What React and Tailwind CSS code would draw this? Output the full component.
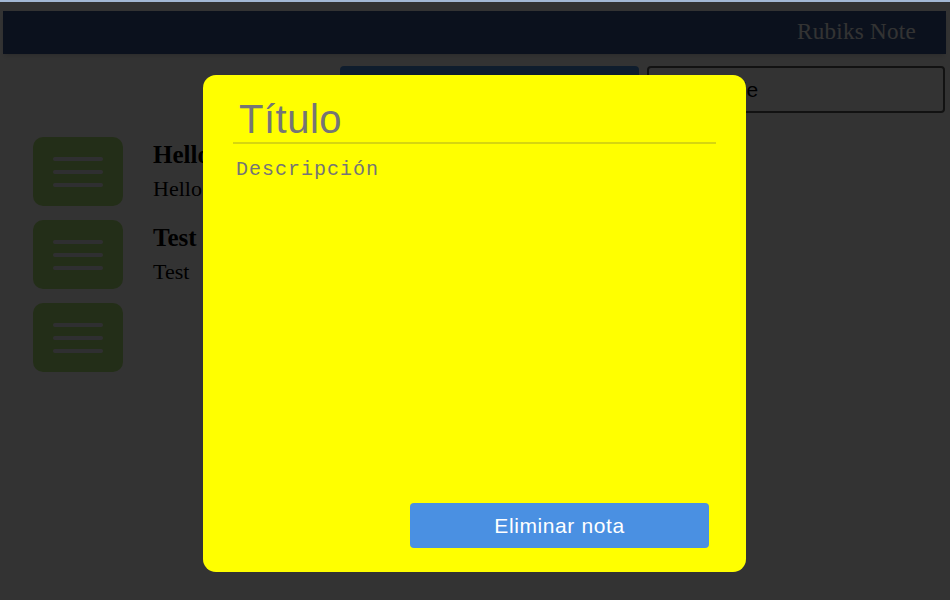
import React from 'react';

const notes = [
  { title: 'Hello', body: 'Hello' },
  { title: 'Test', body: 'Test' },
  { title: '', body: '' },
];

const NoteIcon = () => (
  <div className="w-[90px] h-[69px] shrink-0 rounded-[10px] bg-[#b0e478] flex flex-col items-center justify-center gap-[9px]">
    <div className="w-[50px] h-[4px] rounded-full bg-[#ececf6]" />
    <div className="w-[50px] h-[4px] rounded-full bg-[#ececf6]" />
    <div className="w-[50px] h-[4px] rounded-full bg-[#ececf6]" />
  </div>
);

const App = () => {
  return (
    <div className="min-h-[600px] bg-white" style={{ fontFamily: '"Liberation Serif", serif' }}>
      <div className="relative z-[60] h-[2px] bg-[#a3b8d4]" />

      <nav className="ml-[3px] mr-[4px] mt-[9px] h-[43px] bg-[#37568f] shadow-md flex items-center justify-end pr-[30px]">
        <span className="text-[23px] tracking-[0.3px] text-white">Rubiks Note</span>
      </nav>

      <div className="mt-[12px] flex justify-end gap-[8px] pr-[5px]" style={{ fontFamily: '"Liberation Sans", sans-serif' }}>
        <button className="w-[299px] h-[47px] rounded-[4px] bg-[#4a90e2] text-white text-[21px]">Nueva nota</button>
        <button className="w-[298px] h-[47px] rounded-[4px] border-2 border-[#5a5a5a] bg-white text-black text-[21px] text-left pl-[10px]">Ver detalle</button>
      </div>

      <div className="mt-[24px] px-[33px] flex flex-col gap-[14px]">
        {notes.map((n, i) => (
          <div key={i} className="flex gap-[30px]">
            <NoteIcon />
            <div className="text-black">
              <p className="mt-[3px] text-[25px] leading-[30px] font-bold">{n.title}</p>
              <p className="mt-[4px] text-[22px] leading-[30px]">{n.body}</p>
            </div>
          </div>
        ))}
      </div>

      {/* modal */}
      <div className="fixed inset-0 z-50 bg-black/80 flex justify-center items-start pt-[75px] pr-[1px]">
        <div className="w-[543px] h-[497px] bg-[#ffff00] rounded-[13px] flex flex-col px-[30px] pt-[20px] pb-[24px]">
          <input
            placeholder="Título"
            className="h-[49px] w-full bg-transparent border-b-2 border-[#d6d610] px-[6px] text-[40px] tracking-[0.5px] text-[#757575] placeholder:text-[#757575] outline-none"
            style={{ fontFamily: '"Liberation Sans", sans-serif' }}
          />
          <textarea
            placeholder="Descripción"
            className="flex-1 w-full resize-none bg-transparent px-[3px] pt-[11px] text-[20px] tracking-[1px] text-[#757575] placeholder:text-[#757575] outline-none"
            style={{ fontFamily: '"Liberation Mono", monospace' }}
          />
          <div className="flex justify-end pr-[7px]">
            <button
              className="w-[299px] h-[45px] rounded-[4px] bg-[#4a90e2] text-white text-[21px] tracking-[0.6px]"
              style={{ fontFamily: '"Liberation Sans", sans-serif' }}
            >
              Eliminar nota
            </button>
          </div>
        </div>
      </div>
    </div>
  );
};

export default App;
